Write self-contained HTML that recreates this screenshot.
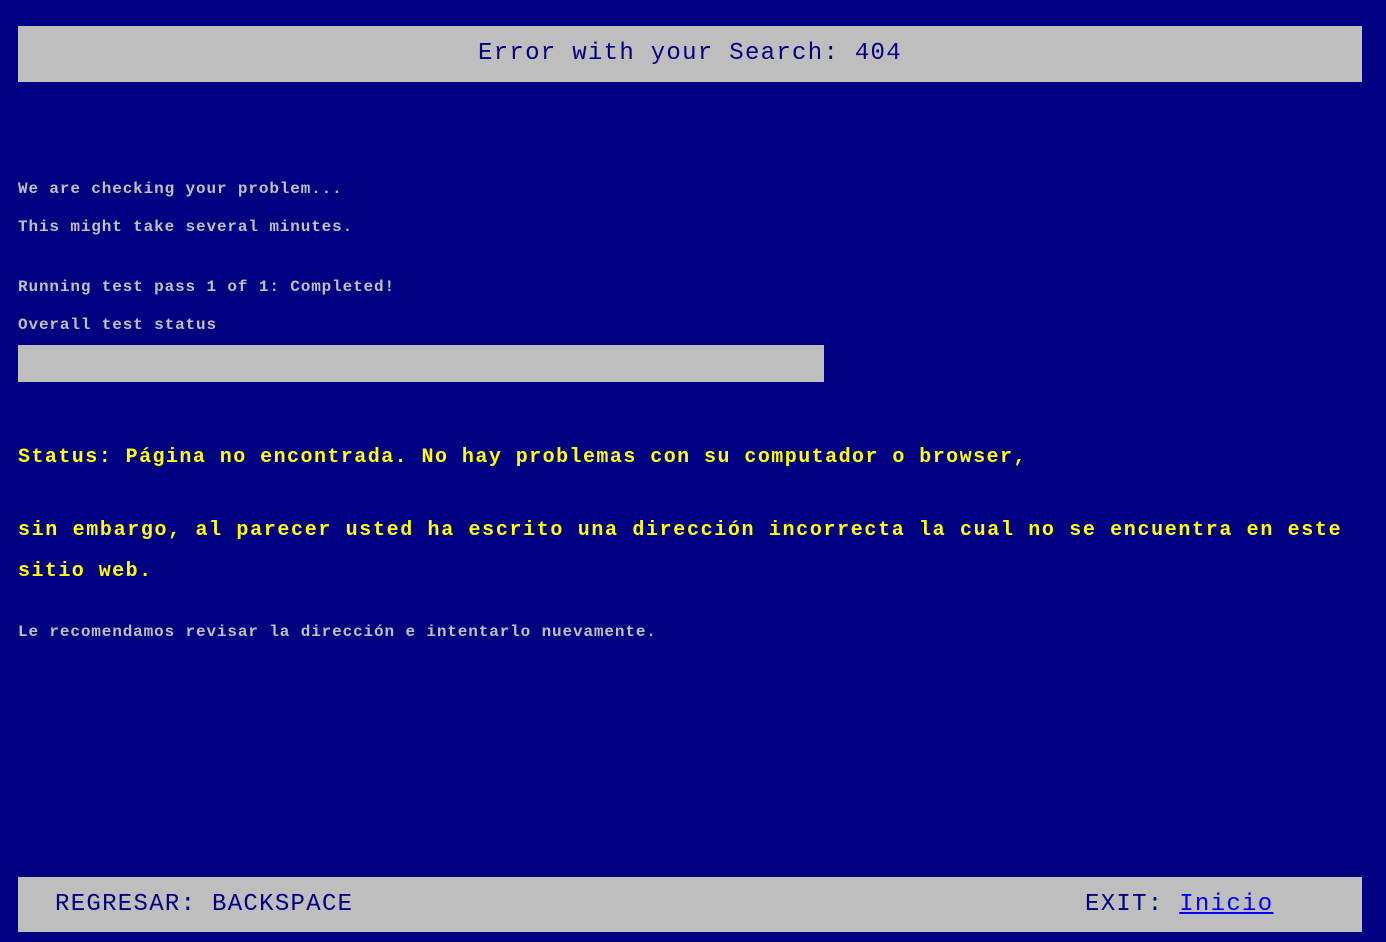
<!DOCTYPE html>
<html><head><meta charset="utf-8"><style>
html,body{margin:0;padding:0;background:#000080;width:1386px;height:942px;overflow:hidden;font-family:"Liberation Mono","Courier New",monospace}
.bar{position:absolute;left:18px;width:1344px;background:#bebebe;color:#000080}
.t{position:absolute;left:18px;white-space:nowrap}
.s{font-size:16px;font-weight:bold;letter-spacing:0.87px;color:#c0c0c0;line-height:16px}
.y{font-size:20px;font-weight:bold;letter-spacing:1.45px;color:#ffff00;line-height:20px}
.b{font-size:24px;letter-spacing:1.3px;line-height:24px}
a{color:#0000ff;text-decoration:underline}
</style></head><body>
<div class="bar" style="top:26px;height:56px"></div>
<div class="t b" style="left:478px;top:42px;color:#000080">Error with your Search: 404</div>
<div class="t s" style="top:181px">We are checking your problem...</div>
<div class="t s" style="top:219px">This might take several minutes.</div>
<div class="t s" style="top:279px">Running test pass 1 of 1: Completed!</div>
<div class="t s" style="top:317px">Overall test status</div>
<div style="position:absolute;left:18px;top:345px;width:806px;height:37px;background:#bebebe"></div>
<div class="t y" style="top:448px">Status: Página no encontrada. No hay problemas con su computador o browser,</div>
<div class="t y" style="top:521px;letter-spacing:1.65px">sin embargo, al parecer usted ha escrito una dirección incorrecta la cual no se encuentra en este</div>
<div class="t y" style="top:562px">sitio web.</div>
<div class="t s" style="top:624px">Le recomendamos revisar la dirección e intentarlo nuevamente.</div>
<div class="bar" style="top:877px;height:55px"></div>
<div class="t b" style="left:55px;top:893px;color:#000080">REGRESAR: BACKSPACE</div>
<div class="t b" style="left:1085px;top:893px;color:#000080">EXIT: <a>Inicio</a></div>
</body></html>
